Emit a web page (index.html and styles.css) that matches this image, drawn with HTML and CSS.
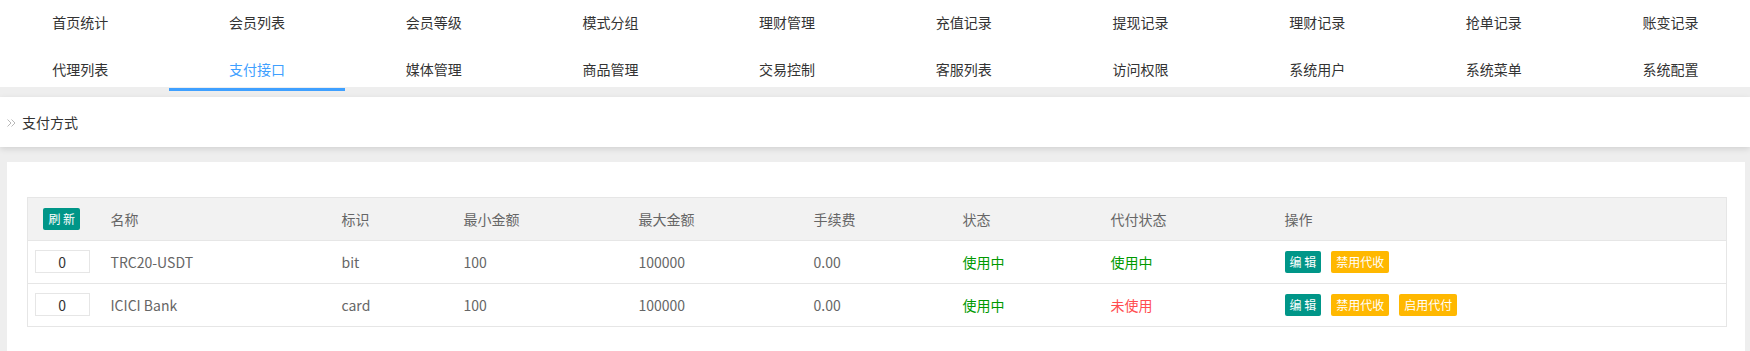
FILE: index.html
```html
<!DOCTYPE html>
<html lang="zh-CN">
<head>
    <meta charset="UTF-8">
    <meta name="viewport" content="width=device-width, initial-scale=1.0">
    <title>支付方式</title>
    <link rel="stylesheet" href="styles.css">
</head>
<body>
    <div class="tabs">
        <ul class="tab-list">
            <li>首页统计</li>
            <li>会员列表</li>
            <li>会员等级</li>
            <li>模式分组</li>
            <li>理财管理</li>
            <li>充值记录</li>
            <li>提现记录</li>
            <li>理财记录</li>
            <li>抢单记录</li>
            <li>账变记录</li>
            <li>代理列表</li>
            <li class="active">支付接口</li>
            <li>媒体管理</li>
            <li>商品管理</li>
            <li>交易控制</li>
            <li>客服列表</li>
            <li>访问权限</li>
            <li>系统用户</li>
            <li>系统菜单</li>
            <li>系统配置</li>
        </ul>
    </div>

    <div class="crumb">
        <svg class="crumb-arrow" width="9" height="8" viewBox="0 0 9 8">
            <polyline points="0.5,0.5 4,4 0.5,7.5" fill="none" stroke="#b8b8b8" stroke-width="1"/>
            <polyline points="4.5,0.5 8,4 4.5,7.5" fill="none" stroke="#b8b8b8" stroke-width="1"/>
        </svg>
        <span>支付方式</span>
    </div>

    <div class="card">
        <table class="pay-table">
            <colgroup>
                <col class="c-sort">
                <col class="c-name">
                <col class="c-code">
                <col class="c-min">
                <col class="c-max">
                <col class="c-fee">
                <col class="c-state">
                <col class="c-df">
                <col>
            </colgroup>
            <thead>
                <tr>
                    <th class="sort"><span class="btn btn-teal">刷 新</span></th>
                    <th>名称</th>
                    <th>标识</th>
                    <th>最小金额</th>
                    <th>最大金额</th>
                    <th>手续费</th>
                    <th>状态</th>
                    <th>代付状态</th>
                    <th>操作</th>
                </tr>
            </thead>
            <tbody>
                <tr>
                    <td class="sort"><input class="sort-input" type="text" value="0"></td>
                    <td>TRC20-USDT</td>
                    <td>bit</td>
                    <td>100</td>
                    <td>100000</td>
                    <td>0.00</td>
                    <td class="on">使用中</td>
                    <td class="on">使用中</td>
                    <td>
                        <span class="btn btn-teal">编 辑</span><span class="btn btn-warm">禁用代收</span>
                    </td>
                </tr>
                <tr>
                    <td class="sort"><input class="sort-input" type="text" value="0"></td>
                    <td>ICICI Bank</td>
                    <td>card</td>
                    <td>100</td>
                    <td>100000</td>
                    <td>0.00</td>
                    <td class="on">使用中</td>
                    <td class="off">未使用</td>
                    <td>
                        <span class="btn btn-teal">编 辑</span><span class="btn btn-warm">禁用代收</span><span class="btn btn-warm">启用代付</span>
                    </td>
                </tr>
            </tbody>
        </table>
    </div>
</body>
</html>
```

FILE: styles.css
```css
html, body {
    overflow: hidden;
}
body {
    margin: 0;
    background-color: #eeeeee;
    font-family: "Noto Sans CJK SC", "Noto Sans", sans-serif;
    font-size: 14px;
    color: #333;
}

/* top tabs */
.tabs {
    height: 87px;
    background: #fff;
    margin-bottom: 10px;
}
.tab-list {
    list-style: none;
    margin: 0 0 0 -8px;
    padding: 0;
    display: grid;
    grid-template-columns: repeat(10, 176.7px);
    grid-auto-rows: 44px;
    row-gap: 3px;
}
.tab-list li {
    position: relative;
    text-align: center;
    line-height: 44px;
    color: #333;
}
.tab-list li.active {
    color: #3fa0ff;
}
.tab-list li.active::after {
    content: "";
    position: absolute;
    left: 0;
    right: 0;
    bottom: 0;
    height: 3px;
    background: #3fa0ff;
}

/* breadcrumb */
.crumb {
    height: 50px;
    background: #fff;
    display: flex;
    align-items: center;
    gap: 6px;
    padding-left: 7px;
    box-shadow: 0 2px 6px rgba(0, 0, 0, 0.12);
    margin-bottom: 15px;
    color: #333;
}
.crumb-arrow {
    display: block;
    margin-top: 2px;
}

/* card + table */
.card {
    background: #fff;
    margin: 0 5px 0 7px;
    padding: 35px 18px 26px 20px;
}
.pay-table {
    width: 100%;
    border-collapse: collapse;
    table-layout: fixed;
    border: 1px solid #e6e6e6;
}
.c-sort { width: 68px; }
.c-name { width: 231px; }
.c-code { width: 122px; }
.c-min { width: 175px; }
.c-max { width: 175px; }
.c-fee { width: 149px; }
.c-state { width: 148px; }
.c-df { width: 174px; }

.pay-table th,
.pay-table td {
    height: 22px;
    padding: 10px 15px;
    line-height: 22px;
    text-align: left;
    font-weight: normal;
    color: #666;
    border-bottom: 1px solid #e6e6e6;
    white-space: nowrap;
    vertical-align: middle;
}
.pay-table th {
    background: #f2f2f2;
}
.pay-table .sort {
    text-align: center;
    padding-left: 0;
    padding-right: 0;
}
.pay-table td.sort {
    padding-top: 9px;
}
.sort-input {
    box-sizing: border-box;
    width: 55px;
    height: 23px;
    padding: 0;
    border: 1px solid #e6e6e6;
    text-align: center;
    font-family: inherit;
    font-size: 14px;
    color: #333;
    vertical-align: top;
    margin: 0 0 0 1px;
}
.pay-table td.on {
    color: #009900;
}
.pay-table td.off {
    color: #ff4d4f;
}

.btn {
    display: inline-block;
    height: 22px;
    line-height: 22px;
    padding: 0 5px;
    font-size: 12px;
    color: #fff;
    border-radius: 2px;
    vertical-align: top;
}
.btn + .btn {
    margin-left: 10px;
}
.btn-teal {
    background: #009688;
}
.btn-warm {
    background: #ffb800;
}
```
